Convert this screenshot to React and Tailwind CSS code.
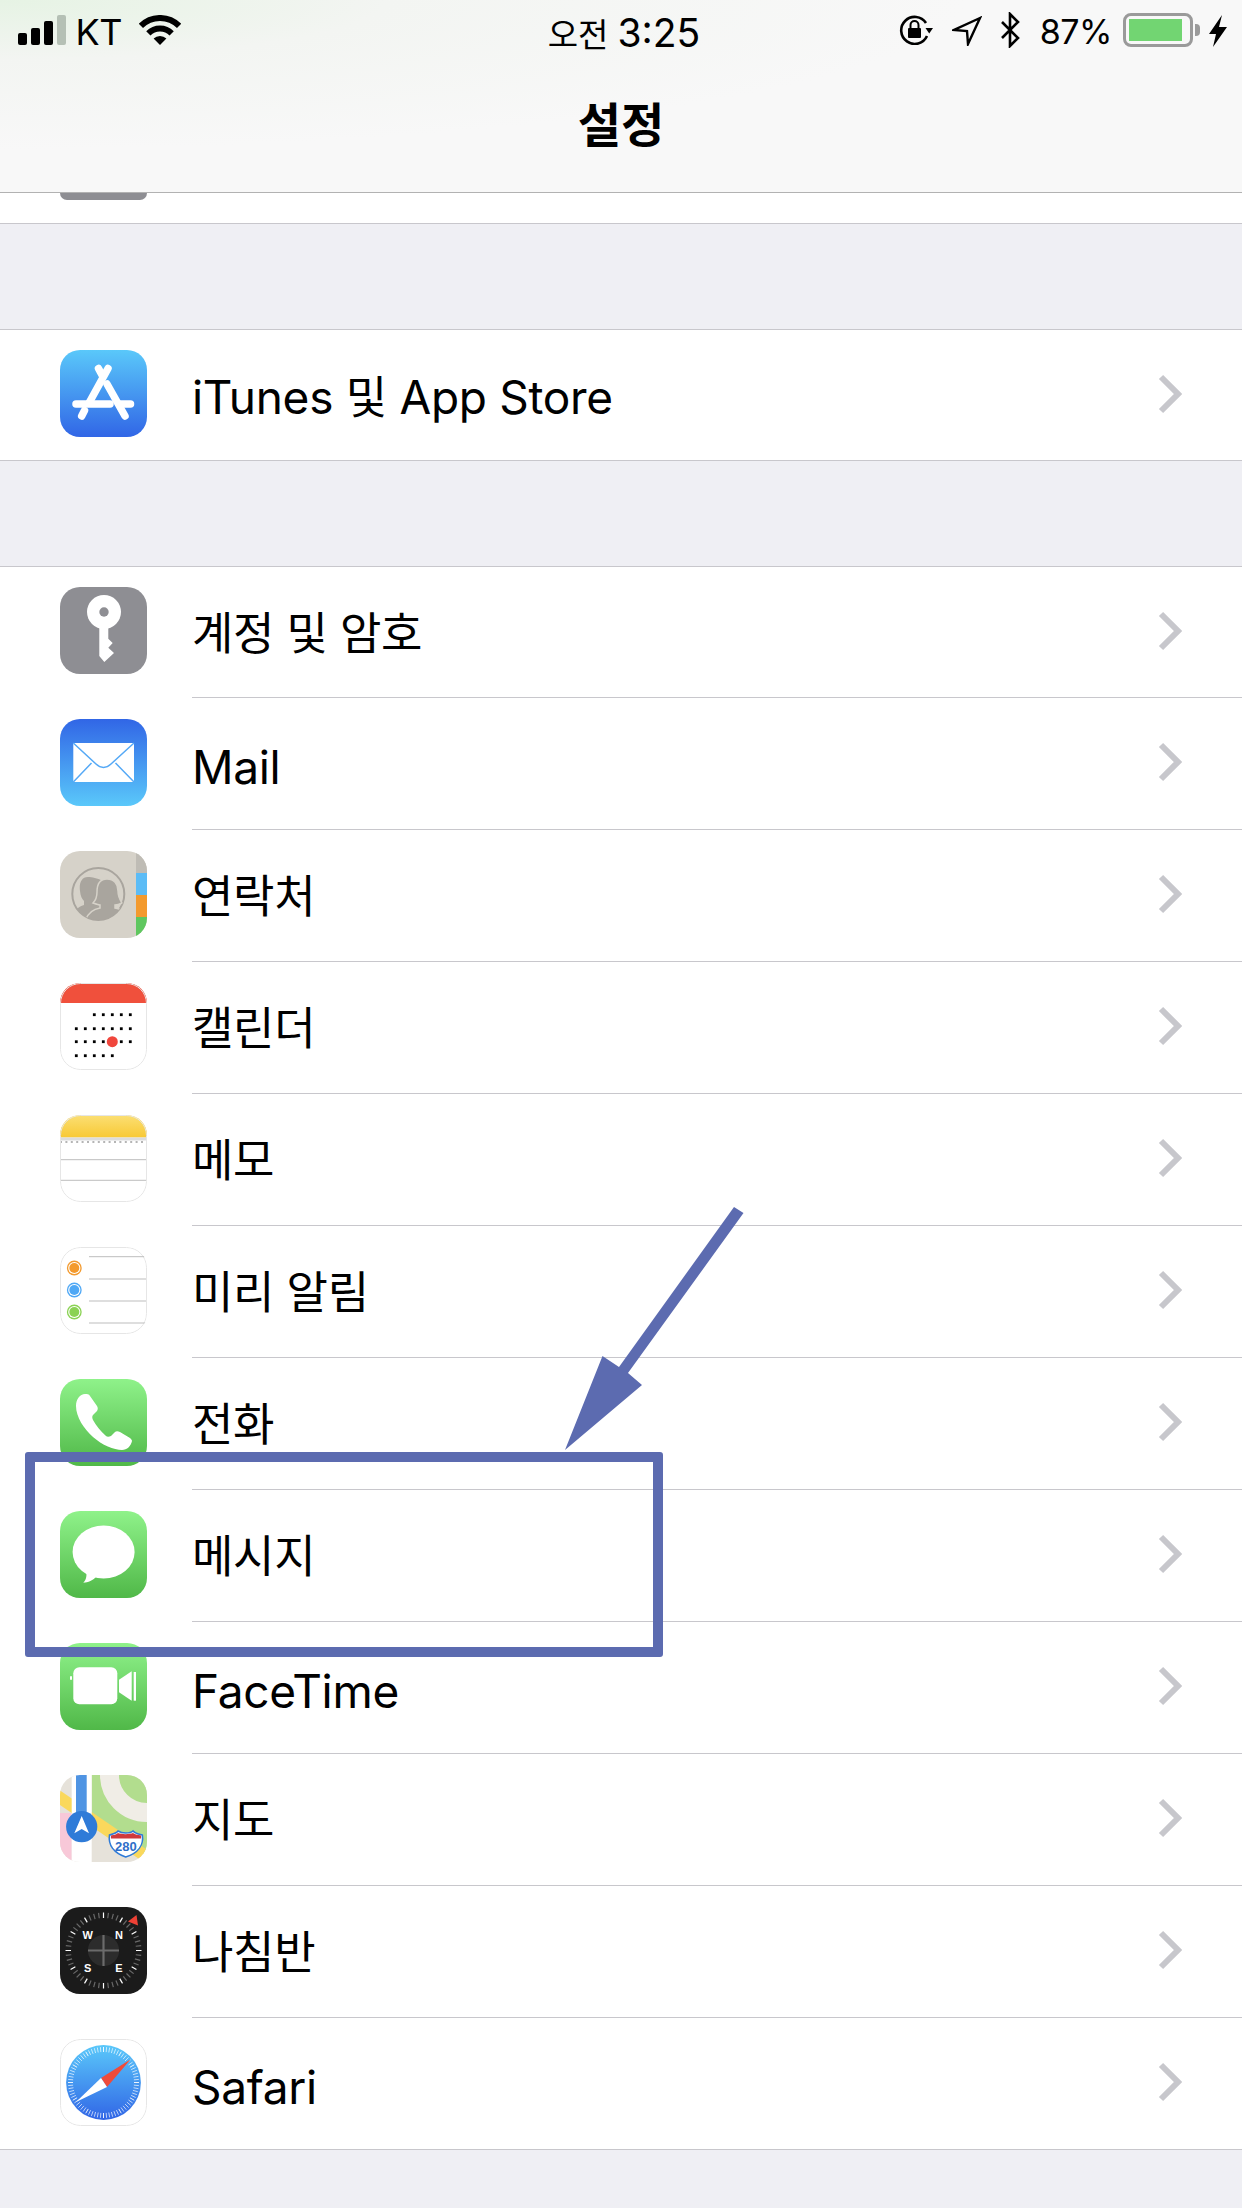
const ticks = (n, r1, r2, cx = 43.5, cy = 43.5) =>
  Array.from({ length: n }, (_, i) => {
    const a = (i * 2 * Math.PI) / n;
    return {
      i,
      x1: cx + r1 * Math.sin(a),
      y1: cy - r1 * Math.cos(a),
      x2: cx + r2 * Math.sin(a),
      y2: cy - r2 * Math.cos(a),
    };
  });

const Svg = ({ children }) => (
  <svg viewBox="0 0 87 87" className="block w-full h-full">
    {children}
  </svg>
);

const Outline = () => (
  <rect x="0.5" y="0.5" width="86" height="86" rx="20" fill="none" stroke="#e6e6e6" />
);

const AppStoreIcon = () => (
  <Svg>
    <defs>
      <linearGradient id="blueDown" x1="0" y1="0" x2="0" y2="1">
        <stop offset="0" stopColor="#5ac8fa" />
        <stop offset="1" stopColor="#3166e6" />
      </linearGradient>
    </defs>
    <rect width="87" height="87" fill="url(#blueDown)" />
    <g stroke="#fff" strokeWidth="7.5" strokeLinecap="round" fill="none">
      <path d="M48 18.5 L29 53" />
      <path d="M24.5 60.5 L21.7 66" />
      <path d="M38.5 18.5 L42 25" />
      <path d="M47 34 L65 66" />
      <path d="M16 54 H50" />
      <path d="M61 54 H70.5" />
    </g>
  </Svg>
);

const KeyIcon = () => (
  <Svg>
    <rect width="87" height="87" fill="#8e8e93" />
    <circle cx="44" cy="25" r="17" fill="#fff" />
    <circle cx="44" cy="25" r="4.7" fill="#8e8e93" />
    <path d="M39.3 36 V69 L44.3 75 L54 66 L48.3 60.7 L52.7 56 L48.3 51.7 V36 Z" fill="#fff" />
  </Svg>
);

const MailIcon = () => (
  <Svg>
    <defs>
      <linearGradient id="blueUp" x1="0" y1="0" x2="0" y2="1">
        <stop offset="0" stopColor="#3166e6" />
        <stop offset="1" stopColor="#5ac8fa" />
      </linearGradient>
    </defs>
    <rect width="87" height="87" fill="url(#blueUp)" />
    <rect x="13.3" y="24" width="60.7" height="39" fill="#fff" />
    <path
      d="M13.3 24 L36 45 C40.5 49.5 46.5 49.5 51 45 L74 24 M13.3 63 L31.5 44 M74 63 L55.5 44"
      fill="none"
      stroke="#55a9f6"
      strokeWidth="1.5"
    />
  </Svg>
);

const ContactsIcon = () => (
  <Svg>
    <defs>
      <clipPath id="contactsRing">
        <circle cx="38.3" cy="43" r="26" />
      </clipPath>
    </defs>
    <rect width="87" height="87" fill="#d6d2c9" />
    <rect x="76" y="0" width="11" height="22" fill="#bfbcb5" />
    <rect x="76" y="22" width="11" height="22" fill="#5cbcf6" />
    <rect x="76" y="44" width="11" height="22" fill="#f39a2e" />
    <rect x="76" y="66" width="11" height="21" fill="#5fc75f" />
    <circle cx="38.3" cy="43" r="26" fill="#d6d2c9" stroke="#a9a59e" strokeWidth="2" />
    <g clipPath="url(#contactsRing)" fill="#a9a59e">
      <path d="M28 26 C21 26 19 33 20 40 C20.5 45 22 48 24 50 V54 C18 56 13 59 12 70 H50 V40 C50 31 36 26 28 26 Z" />
      <path
        d="M47 28 C39 28 37 35 37 41 C37 47 35 50 33 52 C36 53 39 54 40 54 V57 C33 58 28 62 25 70 H70 C68 62 62 58 55 57 V54 C57 54 60 53 62 52 C60 49 58 46 58 40 C58 33 54 28 47 28 Z"
        stroke="#d6d2c9"
        strokeWidth="1.5"
      />
    </g>
  </Svg>
);

const CalendarIcon = () => {
  const cols = [16.3, 25.3, 34.3, 43.3, 52.3, 61.3, 70.3];
  const rows = [
    [31.7, 2, 7],
    [45.7, 0, 7],
    [58.7, 0, 7],
    [72.7, 0, 5],
  ];
  return (
    <Svg>
      <rect width="87" height="87" fill="#fff" />
      <rect width="87" height="20" fill="#f0503c" />
      <Outline />
      {rows.map(([y, from, to]) =>
        cols.slice(from, to).map((x) => (
          <rect key={`${x}-${y}`} x={x - 1.4} y={y - 1.4} width="2.8" height="2.8" fill="#000" />
        ))
      )}
      <circle cx="52.3" cy="58.7" r="5.5" fill="#f0463c" />
    </Svg>
  );
};

const NotesIcon = () => (
  <Svg>
    <defs>
      <linearGradient id="notesTop" x1="0" y1="0" x2="0" y2="1">
        <stop offset="0" stopColor="#fbdf74" />
        <stop offset="1" stopColor="#f8c935" />
      </linearGradient>
    </defs>
    <rect width="87" height="87" fill="#fff" />
    <rect width="87" height="22.5" fill="url(#notesTop)" />
    <rect y="22.5" width="87" height="3" fill="#dcdcdc" />
    <line x1="0" y1="27" x2="87" y2="27" stroke="#b5b5b5" strokeWidth="2" strokeDasharray="2 3.4" />
    <line x1="0" y1="44.7" x2="87" y2="44.7" stroke="#bdbdbd" />
    <line x1="0" y1="65.3" x2="87" y2="65.3" stroke="#bdbdbd" />
    <Outline />
  </Svg>
);

const RemindersIcon = () => (
  <Svg>
    <rect width="87" height="87" fill="#fff" />
    <Outline />
    {[
      [21, "#f39a2e"],
      [43, "#4fa8f5"],
      [65, "#8ad253"],
    ].map(([cy, c]) => (
      <g key={cy}>
        <circle cx="14.3" cy={cy} r="7.4" fill={c} />
        <circle cx="14.3" cy={cy} r="6.1" fill="#fff" />
        <circle cx="14.3" cy={cy} r="5" fill={c} />
      </g>
    ))}
    {[9.7, 32, 54, 76].map((y) => (
      <line key={y} x1="29" y1={y} x2="86" y2={y} stroke="#bdbdbd" />
    ))}
  </Svg>
);

const GreenBg = ({ id }) => (
  <>
    <defs>
      <linearGradient id={id} x1="0" y1="0" x2="0" y2="1">
        <stop offset="0" stopColor="#8ff28a" />
        <stop offset="1" stopColor="#50b848" />
      </linearGradient>
    </defs>
    <rect width="87" height="87" fill={`url(#${id})`} />
  </>
);

const PhoneIcon = () => (
  <Svg>
    <GreenBg id="greenPhone" />
    <path
      d="M25 15 C20 15 16 20 16 27 C16 38 24 50 33 58 C42 66 54 71 62 71 C67 71 71 67 72 62 C72 61 71 60 70 59 L60 53 C58 52 56 52 55 53 L51 57 C49 58 47 58 46 57 C40 52 36 46 33 41 C32 39 32 37 33 36 L37 32 C38 30 38 29 37 27 L30 17 C29 15 27 15 25 15 Z"
      fill="#fff"
    />
  </Svg>
);

const MessagesIcon = () => (
  <Svg>
    <GreenBg id="greenMsg" />
    <ellipse cx="43.6" cy="41" rx="31" ry="26.5" fill="#fff" />
    <path d="M26 60 C27 64 26.5 69 23.3 71.7 C28 71.5 33 69.5 37 65 Z" fill="#fff" />
  </Svg>
);

const FaceTimeIcon = () => (
  <Svg>
    <GreenBg id="greenFt" />
    <rect x="13.3" y="24.3" width="44" height="37" rx="6" fill="#fff" />
    <path d="M59 36.7 L71.7 28.3 V57.7 L59 49.3 Z" fill="#fff" />
    <rect x="73.7" y="29" width="2.3" height="28.7" fill="#fff" />
    <rect x="10" y="33" width="2" height="4" rx="1" fill="#fff" />
  </Svg>
);

const MapsIcon = () => (
  <Svg>
    <rect width="87" height="87" fill="#e6e2da" />
    <path d="M31.7 0 H87 V82 L31.7 46 Z" fill="#b2dd8e" />
    <circle cx="87" cy="0" r="37.5" fill="none" stroke="#f0ede6" strokeWidth="19" />
    <rect x="0" y="38" width="11.7" height="49" fill="#f8c8d8" />
    <line x1="-4" y1="20" x2="84" y2="80" stroke="#fad85c" strokeWidth="12" />
    <rect x="11.7" y="0" width="20" height="87" fill="#fff" />
    <rect x="16" y="0" width="10.7" height="46" fill="#4f94e3" />
    <circle cx="21.7" cy="51.7" r="15.6" fill="#2f7bd8" />
    <path d="M21.7 41 L29 58.3 L21.7 54 L14.3 58.3 Z" fill="#fff" />
    <path
      d="M49.5 60 C53 59 56 58.5 58 56 C61 58 63 58 65.7 58 C68 58 71 58 73 56 C75 58.5 79 59 82.3 60 C84 70 78 78 65.7 82 C54 78 48 70 49.5 60 Z"
      fill="#fff"
      stroke="#2f7bd8"
      strokeWidth="1.6"
    />
    <path d="M51 60.5 C54 60 56 59.5 58 58 C61 59.5 70 59.5 73 58 C75 59.5 78 60 81 60.5 V63.5 H51 Z" fill="#cf3a3c" />
    <text
      x="65.9"
      y="75.5"
      textAnchor="middle"
      fontSize="13"
      fontWeight="700"
      fill="#2f6fc8"
      fontFamily="'Liberation Sans', sans-serif"
    >
      280
    </text>
  </Svg>
);

const CompassIcon = () => (
  <Svg>
    <rect width="87" height="87" fill="#1b1b1b" />
    {ticks(48, 32.5, 38).map((t) => (
      <line
        key={t.i}
        x1={t.x1}
        y1={t.y1}
        x2={t.x2}
        y2={t.y2}
        stroke={t.i % 4 === 0 ? "#ffffff" : "#6a6a6a"}
        strokeWidth="1.2"
      />
    ))}
    <path d="M76.5 8 L78 18.5 L68 14.5 Z" fill="#ee4135" />
    <circle cx="43.5" cy="43.5" r="15.6" fill="#2c2c2c" />
    <path d="M43.5 28 V59 M28 43.5 H59" stroke="#6b6b6b" strokeWidth="2.2" />
    <g fill="#fff" fontSize="11" fontWeight="700" textAnchor="middle" fontFamily="'Liberation Sans', sans-serif">
      <text x="59" y="31.8">N</text>
      <text x="27.7" y="31.8">W</text>
      <text x="27.7" y="65">S</text>
      <text x="59" y="65">E</text>
    </g>
  </Svg>
);

const SafariIcon = () => (
  <Svg>
    <defs>
      <linearGradient id="safariDial" x1="0" y1="0" x2="0" y2="1">
        <stop offset="0" stopColor="#5ac8fa" />
        <stop offset="1" stopColor="#3166e6" />
      </linearGradient>
    </defs>
    <rect width="87" height="87" fill="#fff" />
    <Outline />
    <circle cx="43.5" cy="43.5" r="37.4" fill="url(#safariDial)" />
    {ticks(72, 30.5, 35.5).map((t) => (
      <line
        key={t.i}
        x1={t.x1}
        y1={t.y1}
        x2={t.x2}
        y2={t.y2}
        stroke="#fff"
        strokeOpacity={t.i % 6 === 0 ? 1 : 0.75}
        strokeWidth="0.9"
      />
    ))}
    <path d="M70.7 20.3 L41 39 L47 48 Z" fill="#ef4b3a" />
    <path d="M16 63 L41 39 L47 48 Z" fill="#fff" />
  </Svg>
);

const KO = "text-[45px]";
const EN = "block mt-[5px]";

const firstGroup = [
  { icon: <KeyIcon />, label: <span className={KO}>계정 및 암호</span> },
  { icon: <MailIcon />, label: <span className={EN}>Mail</span> },
  { icon: <ContactsIcon />, label: <span className={KO}>연락처</span> },
  { icon: <CalendarIcon />, label: <span className={KO}>캘린더</span> },
  { icon: <NotesIcon />, label: <span className={KO}>메모</span> },
  { icon: <RemindersIcon />, label: <span className={KO}>미리 알림</span> },
  { icon: <PhoneIcon />, label: <span className={KO}>전화</span> },
  { icon: <MessagesIcon />, label: <span className={KO}>메시지</span> },
  { icon: <FaceTimeIcon />, label: <span className={EN}>FaceTime</span> },
  { icon: <MapsIcon />, label: <span className={KO}>지도</span> },
  { icon: <CompassIcon />, label: <span className={KO}>나침반</span> },
  { icon: <SafariIcon />, label: <span className={EN}>Safari</span> },
];

const Row = ({ icon, label, first, last }) => (
  <div className={`flex bg-white ${first ? "h-[131px]" : "h-[132px]"} ${last ? "border-b border-[#c8c7cc]" : ""}`}>
    <div
      className={`ml-[60px] w-[87px] h-[87px] rounded-[20px] overflow-hidden shrink-0 ${
        first ? "mt-[20px]" : "mt-[21px]"
      }`}
    >
      {icon}
    </div>
    <div
      className={`ml-[45px] flex-1 flex items-center justify-between pt-[1px] pr-[60px] ${
        last ? "" : "border-b border-[#c8c7cc]"
      }`}
    >
      <div className="text-[46px] leading-none tracking-[-0.3px] text-black">{label}</div>
      <svg viewBox="0 0 24 40" className="w-[24px] h-[40px] mb-[4px]">
        <path d="M3 3 L20 20 L3 37" fill="none" stroke="#c7c7cc" strokeWidth="6" />
      </svg>
    </div>
  </div>
);

const StatusBar = () => (
  <div className="h-[60px] grid grid-cols-[1fr_auto_1fr] text-[36px] leading-none text-black">
    <div className="flex items-start pl-[18px] pt-[15px]">
      <div className="flex items-end gap-[4.5px] h-[30px]">
        <div className="w-[8.5px] h-[12px] rounded-[2px] bg-black" />
        <div className="w-[8.5px] h-[17px] rounded-[2px] bg-black" />
        <div className="w-[8.5px] h-[24px] rounded-[2px] bg-black" />
        <div className="w-[8.5px] h-[30px] rounded-[2px] bg-[#b5c0b5]" />
      </div>
      <span className="ml-[10px] mt-[-1px] tracking-[-0.5px]">KT</span>
      <svg viewBox="0 0 42 30" className="ml-[17px] w-[42px] h-[30px]">
        <path d="M1.9 10.9 A27 27 0 0 1 40.1 10.9 M9.33 18.33 A16.5 16.5 0 0 1 32.67 18.33" fill="none" stroke="#000" strokeWidth="6" />
        <path d="M21 30 L14.6 23.6 A9 9 0 0 1 27.4 23.6 Z" fill="#000" />
      </svg>
    </div>
    <div className="pt-[13px] ml-[6px] flex items-baseline">
      <span className="text-[33px]">오전</span>
      <span className="ml-[9px] text-[39px]">3:25</span>
    </div>
    <div className="flex items-start justify-end pr-[15px] pt-[12px]">
      <svg viewBox="0 0 34 30" className="mt-[3px] w-[34px] h-[30px]">
        <path d="M27 8 A13.5 13.5 0 1 0 28 21" fill="none" stroke="#000" strokeWidth="2.6" />
        <path d="M26.5 13 H34 L30.2 18.5 Z" fill="#000" />
        <rect x="9" y="13" width="13" height="10" rx="1" fill="#000" />
        <path d="M11.5 13 V10 A4 4 0 0 1 19.5 10 V13" fill="none" stroke="#000" strokeWidth="2" />
      </svg>
      <svg viewBox="0 0 30 30" className="mt-[4px] ml-[19px] w-[30px] h-[30px]">
        <path d="M28 2 L2 14 L15 15 L16 28 Z" fill="none" stroke="#000" strokeWidth="2.4" strokeLinejoin="miter" />
      </svg>
      <svg viewBox="0 0 21 36" className="ml-[18px] w-[21px] h-[36px]">
        <path d="M2 10 L18 26 L10 34 V2 L18 10 L2 26" fill="none" stroke="#000" strokeWidth="2.6" />
      </svg>
      <span className="ml-[19px] mt-[3px] text-[34px] tracking-[-0.5px]">87%</span>
      <div className="ml-[11px] mt-[1px] w-[70px] h-[34px] rounded-[8px] border-[3px] border-[#9a9a9a] p-[3px] pr-[8px]">
        <div className="w-full h-full bg-[#72d572]" />
      </div>
      <div className="mt-[12px] ml-[2px] w-[5px] h-[12px] rounded-r-[4px] bg-[#9a9a9a]" />
      <svg viewBox="0 0 18 32" className="mt-[3px] ml-[9px] w-[18px] h-[32px]">
        <path d="M13 0 L0 19 H7 L4 32 L18 12 H10 Z" fill="#000" />
      </svg>
    </div>
  </div>
);

export default function App() {
  return (
    <div className="relative w-[1242px] h-[2208px] overflow-hidden bg-[#efeff4] font-[Inter,'Noto_Sans_CJK_KR',sans-serif]">
      <header className="h-[193px] border-b border-[#b2b2b2] bg-[radial-gradient(ellipse_at_top_left,#e6f3e4_0%,#f3f5f2_22%,#f8f8f8_55%)]">
        <StatusBar />
        <h1 className="mt-[41px] text-center text-[47px] leading-none font-bold text-black">설정</h1>
      </header>

      <div className="h-[31px] bg-white border-b border-[#c8c7cc]">
        <div className="ml-[60px] w-[87px] h-[7px] rounded-b-[14px] bg-[#8e8e93]" />
      </div>

      <div className="mt-[105px] border-t border-[#c8c7cc]">
        <Row
          icon={<AppStoreIcon />}
          label={
            <span className="block mt-[3px]">
              iTunes <span className={KO}>및</span> App Store
            </span>
          }
          first
          last
        />
      </div>

      <div className="mt-[105px] border-t border-[#c8c7cc]">
        {firstGroup.map((item, i) => (
          <Row key={i} icon={item.icon} label={item.label} first={i === 0} last={i === firstGroup.length - 1} />
        ))}
      </div>

      {/* annotation drawn over the screenshot */}
      <div className="absolute left-[25px] top-[1452px] w-[638px] h-[205px] border-[10px] border-[#5c6bb0] rounded-[3px]" />
      <svg viewBox="560 1200 190 255" className="absolute left-[560px] top-[1200px] w-[190px] h-[255px]">
        <path d="M734 1207 L743.5 1213 L628 1373 L642 1385 L565 1450 L602.5 1356 L619 1367 Z" fill="#5c6bb0" />
      </svg>
    </div>
  );
}
